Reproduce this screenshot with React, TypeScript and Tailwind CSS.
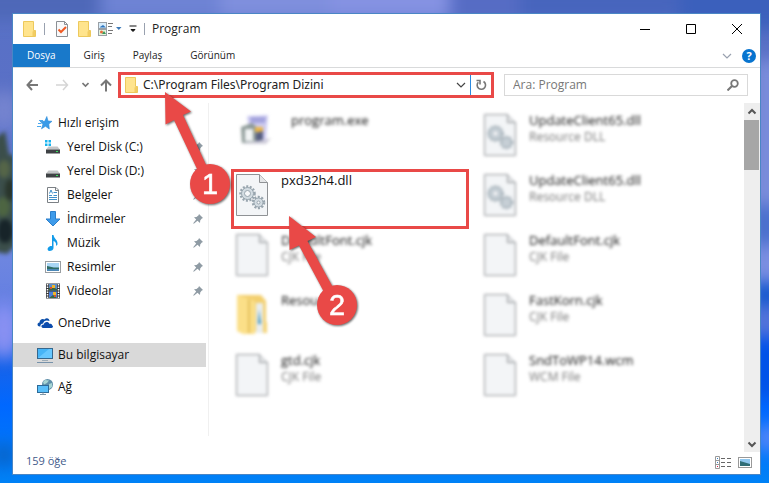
import type { ReactNode } from 'react';

type NavItem = { label: string; icon: ReactNode; child?: boolean; active?: boolean; gap?: boolean };
type FileItem = { name: string; type?: string; icon: ReactNode; active?: boolean; indent?: boolean };

function Wallpaper() {
  return (
    <svg
      className="absolute inset-0 w-full h-full"
      viewBox="0 0 769 483"
      preserveAspectRatio="none"
      aria-hidden="true"
    >
      <defs>
        <linearGradient id="sky" x1="0" y1="0" x2="0" y2="1">
          <stop offset="0" stopColor="#5871c6" />
          <stop offset="0.2" stopColor="#5a70c6" />
          <stop offset="0.5" stopColor="#7188df" />
          <stop offset="0.62" stopColor="#6580e2" />
          <stop offset="0.76" stopColor="#1663ea" />
          <stop offset="0.84" stopColor="#0068ff" />
          <stop offset="1" stopColor="#0082f6" />
        </linearGradient>
        <filter id="soft" x="-20%" y="-20%" width="140%" height="140%" colorInterpolationFilters="sRGB">
          <feGaussianBlur stdDeviation="8" />
        </filter>
        <filter id="leafSoft" colorInterpolationFilters="sRGB">
          <feGaussianBlur stdDeviation="2" />
        </filter>
      </defs>
      <rect width="769" height="483" fill="url(#sky)" />
      <g filter="url(#soft)">
        <rect x="-30" y="-30" width="130" height="50" fill="#4e68b8" />
        <rect x="100" y="-30" width="120" height="50" fill="#6e83d4" />
        <rect x="220" y="-30" width="110" height="50" fill="#7f8fdd" />
        <rect x="330" y="-30" width="120" height="50" fill="#8592e2" />
        <rect x="450" y="-30" width="70" height="50" fill="#566cc4" />
        <rect x="520" y="-30" width="160" height="50" fill="#4765bd" />
        <rect x="680" y="-30" width="110" height="60" fill="#3b60bc" />
        <rect x="752" y="60" width="30" height="145" fill="#7a8cda" />
        <rect x="752" y="205" width="30" height="40" fill="#4a70cc" />
        <rect x="752" y="245" width="30" height="35" fill="#7b8fe0" />
        <rect x="752" y="283" width="30" height="22" fill="#1057cc" />
        <rect x="752" y="305" width="30" height="32" fill="#5273d9" />
        <rect x="752" y="337" width="30" height="60" fill="#0052e8" />
        <ellipse cx="768" cy="438" rx="14" ry="14" fill="#5486f7" />
        <ellipse cx="4" cy="110" rx="16" ry="20" fill="#7584cf" />
        <ellipse cx="4" cy="330" rx="16" ry="28" fill="#8a91f2" />
        <ellipse cx="4" cy="455" rx="12" ry="12" fill="#0863c6" />
      </g>
      <g filter="url(#leafSoft)">
        <path d="M-4 138L5 131L9 154L15 156V246L7 254L-4 252Z" fill="#3b4e4a" />
        <ellipse cx="4" cy="169" rx="6" ry="9" fill="#556548" />
        <ellipse cx="10" cy="190" rx="5" ry="11" fill="#29352b" />
        <ellipse cx="3" cy="207" rx="7" ry="10" fill="#4d6542" />
        <ellipse cx="5" cy="231" rx="8" ry="12" fill="#172429" />
      </g>
    </svg>
  );
}

function FolderIcon() {
  return (
    <svg width="13" height="16" viewBox="0 0 13 16" aria-hidden="true">
      <path d="M0.5 0.5H10.500V9.500H12.500V15.500H0.500Z" fill="#ffe48d" stroke="#edc95c" />
      <path d="M9.500 15V10.500L12 9.500V15Z" fill="#f2cc62" />
    </svg>
  );
}

function CheckPageIcon() {
  return (
    <svg width="12" height="16" viewBox="0 0 12 16" fill="none" aria-hidden="true">
      <path d="M0.5 0.5H8.500L11.500 3.500V15.500H0.500Z" fill="#f8f9fa" stroke="#8b8f94" />
      <path d="M8.500 0.500V3.500H11.500" stroke="#8b8f94" />
      <path d="M2.500 8.500L5 11L10 6" stroke="#f05a23" strokeWidth="2" />
    </svg>
  );
}

function ViewMenuIcon() {
  return (
    <svg width="24" height="16" viewBox="0 0 24 16" aria-hidden="true">
      <rect x="0.5" y="1.5" width="8" height="6" fill="#d7ecfb" stroke="#9aa0a6" />
      <path d="M2 6L5 4L8 6.500H2Z" fill="#2d74bd" />
      <rect x="0.5" y="8.500" width="8" height="6" fill="#e5f3dd" stroke="#9aa0a6" />
      <circle cx="3.500" cy="11" r="1.500" fill="#e76a3c" />
      <path d="M4 13L6 10L8 13Z" fill="#3d9656" />
      <path d="M10 2.500H15M10 5.500H14M10 9.500H15M10 12.500H14" stroke="#777" />
      <path d="M18 6H23.500L20.800 9Z" fill="#3d7ab8" />
    </svg>
  );
}

function StarIcon() {
  return (
    <svg width="16" height="16" viewBox="0 0 16 16" aria-hidden="true">
      <path d="M9.800 1.500L11 6L15 6.300L11.800 9L12.300 14L8.500 11.300L4.500 13.800L6 9L3 6.300H7.800Z" fill="#3a9be8" stroke="#2b8bd8" strokeWidth="0.6" />
      <path d="M2 5.500H6M1 8.500H4.500M0 11.500H4" stroke="#4ba8ed" />
    </svg>
  );
}

function DriveIcon({ system = false }: { system?: boolean }) {
  return (
    <svg width="16" height="16" viewBox="0 0 16 16" aria-hidden="true">
      {system && (
        <path d="M0 1H2.500V3.500H0ZM3.500 1H6V3.500H3.500ZM0 4.500H2.500V7H0ZM3.500 4.500H6V7H3.500Z" fill="#18b4ef" />
      )}
      <path d="M3.500 7.500H12.500L15 10.500H1Z" fill="#c3c5c7" />
      <rect x="1" y="10.500" width="14" height="4" fill="#3f4245" />
      <rect x="11" y="12" width="2" height="1" fill="#38e15c" />
    </svg>
  );
}

function DocumentIcon() {
  return (
    <svg width="16" height="16" viewBox="0 0 16 16" fill="none" aria-hidden="true">
      <path d="M2.500 0.500H11L13.500 3V15.500H2.500Z" fill="#fff" stroke="#7b8085" />
      <path d="M10.500 0.500V3.500H13.500" stroke="#7b8085" />
      <path d="M4.500 6.500L6 3L7.500 6.500M8.500 5.500H12M4 8.500H7M8.500 8.500H12M4 10.500H12M4 12.500H12" stroke="#3f8fc9" />
    </svg>
  );
}

function DownloadIcon() {
  return (
    <svg width="16" height="16" viewBox="0 0 16 16" aria-hidden="true">
      <path d="M5.500 0.500H10.500V8H15L8 15L1 8H5.500Z" fill="#3e9bea" stroke="#2b7fcb" />
    </svg>
  );
}

function MusicIcon() {
  return (
    <svg width="16" height="16" viewBox="0 0 16 16" aria-hidden="true">
      <path d="M7 0H8.500C9 4 13 4.500 12.500 9.500L11 11C11.500 7.500 10 6.500 8.500 6V13C8.500 15 6.500 16 4.500 16C2 16 2 12.500 4.500 11.500C5.500 11 6.500 11 7 11.300Z" fill="#129be9" />
    </svg>
  );
}

function PictureIcon() {
  return (
    <svg width="16" height="16" viewBox="0 0 16 16" aria-hidden="true">
      <rect x="0.5" y="2.500" width="15" height="11" fill="#fff" stroke="#999ea2" />
      <rect x="2" y="4" width="12" height="8" fill="#a9d6f5" />
      <path d="M2 7C6 7.500 8 9 14 8.500V10H2Z" fill="#2f6d66" />
      <path d="M2 10H14V12H2Z" fill="#4c88b7" />
    </svg>
  );
}

function VideoIcon() {
  return (
    <svg width="16" height="16" viewBox="0 0 16 16" aria-hidden="true">
      <rect x="1" y="0.5" width="14" height="15" fill="#37393c" />
      <path d="M2.500 1V15M13.500 1V15" stroke="#fff" strokeWidth="1.500" strokeDasharray="1.500 1" />
      <rect x="4" y="1" width="8" height="6.500" fill="#5d8ec8" />
      <rect x="4" y="8.500" width="8" height="6.500" fill="#4c7fdc" />
      <path d="M4 7.500V5L7 4L12 6V7.500ZM4 15L8 12L12 15Z" fill="#376745" />
      <path d="M7 2H10V5H7ZM8 9H11V12H8Z" fill="#f0b62a" />
      <path d="M5 4H7V6H5ZM9 12H11V14H9Z" fill="#d95131" />
    </svg>
  );
}

function CloudIcon() {
  return (
    <svg width="16" height="16" viewBox="0 0 16 16" aria-hidden="true">
      <path d="M3.500 11.500C0 12 -0.500 8 2.500 7.500C2.500 4.500 5.500 3 7.500 4.500C9.500 2 12.500 3.500 12.500 6C9 4.500 6.500 6 6.200 8.500C4 8.500 3 10 3.500 11.500Z" fill="#0b4eaa" />
      <path d="M6 13C3.500 12.500 4 9.500 6.800 9.500C7 6.500 11.500 6 12.500 9C14.500 8.500 15 9.500 15 10.200C16.500 10.500 16.300 13 14.500 13Z" fill="#0c4cad" />
    </svg>
  );
}

function MonitorIcon() {
  return (
    <svg width="16" height="16" viewBox="0 0 16 16" aria-hidden="true">
      <rect x="0.5" y="1.500" width="15" height="10" fill="#47b5f7" stroke="#35678d" />
      <path d="M1 11L12 2H15V11Z" fill="#68c8ff" />
      <path d="M5 13.500H11" stroke="#9dacb8" />
      <path d="M0 15.500H16" stroke="#7792aa" />
    </svg>
  );
}

function NetworkIcon() {
  return (
    <svg width="16" height="16" viewBox="0 0 16 16" aria-hidden="true">
      <circle cx="10.500" cy="5.500" r="5.500" fill="#5f8fa9" />
      <path d="M8 1L12 1.500L10 4L7 5.500L6 3ZM12 5L15 4V8L12 10Z" fill="#a7d5d3" />
      <rect x="0.5" y="6.500" width="11" height="7" fill="#59bff9" stroke="#2d6b99" />
      <path d="M6 13.500V15.500M3 15.500H9" stroke="#7e97a8" />
    </svg>
  );
}

function PinIcon() {
  return (
    <svg className="ml-auto mr-[3px]" width="10" height="10" viewBox="0 0 10 10" aria-hidden="true">
      <path d="M6 0L10 4L8.800 4.500L7.200 6.500L7 9L4.500 6.800L0.800 9.800L0.200 9.200L3.200 5.500L1 3.200L3.500 3L5.600 1.300Z" fill="#8f9ba4" />
    </svg>
  );
}

function Gear({ x, y, r }: { x: number; y: number; r: number }) {
  return (
    <g fill="none" stroke="#98a5ae">
      <circle cx={x} cy={y} r={r} strokeWidth="2.500" strokeDasharray="2 1.500" />
      <circle cx={x} cy={y} r={r - 1} fill="#d3dce2" />
      <circle cx={x} cy={y} r={r - 4} fill="#f7f8fa" />
    </g>
  );
}

function PageIcon({ gears = false }: { gears?: boolean }) {
  return (
    <svg width="32" height="42" viewBox="0 0 32 42" aria-hidden="true">
      <path d="M0.5 0.5H23.500L31.500 8.500V41.500H0.500Z" fill="#f3f5f7" stroke="#8f9295" />
      <path d="M23.500 0.500V8.500H31.500" fill="#e4e6e8" stroke="#8f9295" />
      {gears && (
        <>
          <Gear x={11.5} y={19.5} r={7} />
          <Gear x={22.5} y={28.5} r={5.5} />
        </>
      )}
    </svg>
  );
}

function ProgramIcon() {
  return (
    <svg width="36" height="42" viewBox="0 0 36 42" aria-hidden="true">
      <path d="M11 2L32 1L30 27L14 24Z" fill="#cfcdf2" />
      <path d="M14 3H30L29 9H15Z" fill="#a3a3dd" />
      <path d="M5 13L16 9L22 14V27L6 29Z" fill="#8d9a98" />
      <path d="M9 15H17V27H9Z" fill="#f2f5f6" />
      <path d="M19 13H27V18H19Z" fill="#edb646" />
      <path d="M20 19L27 17V28H20Z" fill="#565d80" />
      <path d="M27 26L35 24L30 30H5Z" fill="#cfcdda" />
    </svg>
  );
}

function OpenFolderIcon() {
  return (
    <svg width="32" height="42" viewBox="0 0 32 42" aria-hidden="true">
      <path d="M1 1H25L30 7V38H22L1 35Z" fill="#f3cf6e" />
      <path d="M20 9H27V39H20Z" fill="#e9eef0" />
      <path d="M23 15L25 30H22Z" fill="#3b91b8" />
      <path d="M1 1L19 7V40H7L1 37Z" fill="#fbdf88" />
      <path d="M12 5L14 6V39H12Z" fill="#e3bf5c" />
      <path d="M27 28H31V39H27Z" fill="#f6d477" />
    </svg>
  );
}

function Chevron({ bold = false, className }: { bold?: boolean; className: string }) {
  return (
    <svg className={className} width="10" height="8" viewBox="0 0 10 8" fill="none" stroke="currentColor" aria-hidden="true">
      <path d={bold ? 'M1.500 2.500L5 6L8.500 2.500' : 'M1 2L5 6L9 2'} strokeWidth={bold ? 2 : 1.2} />
    </svg>
  );
}

// Numbered marker: the tip of the arrow is always at (10, 10)
function Callout({ step, className }: { step: 1 | 2; className: string }) {
  const first = step === 1;
  return (
    <svg
      className={'absolute z-10 max-w-none pointer-events-none drop-shadow-[1px_1px_1px_rgba(0,0,0,0.6)] ' + className}
      width="84"
      height="126"
      viewBox="0 0 84 126"
    >
      <g fill="#e94947">
        <path
          d={
            first
              ? 'M10 10L36 29.500L28 33L59 100L50 104L19 38L10.500 42.500Z'
              : 'M10 10L37 31L28.500 35L62 96L53 101L20 39.500L10.500 44Z'
          }
        />
        <circle cx={first ? 55 : 58} cy={first ? 102 : 99} r="20" />
      </g>
      <text
        x={first ? 55 : 58}
        y={first ? 112 : 109}
        textAnchor="middle"
        fill="#fff"
        stroke="#fff"
        strokeWidth="0.5"
        className="font-['Liberation_Sans',sans-serif] text-[29px]"
      >
        {step}
      </text>
    </svg>
  );
}

const navItems: NavItem[] = [
  { label: 'Hızlı erişim', icon: <StarIcon /> },
  { label: 'Yerel Disk (C:)', icon: <DriveIcon system />, child: true },
  { label: 'Yerel Disk (D:)', icon: <DriveIcon />, child: true },
  { label: 'Belgeler', icon: <DocumentIcon />, child: true },
  { label: 'İndirmeler', icon: <DownloadIcon />, child: true },
  { label: 'Müzik', icon: <MusicIcon />, child: true },
  { label: 'Resimler', icon: <PictureIcon />, child: true },
  { label: 'Videolar', icon: <VideoIcon />, child: true },
  { label: 'OneDrive', icon: <CloudIcon />, gap: true },
  { label: 'Bu bilgisayar', icon: <MonitorIcon />, gap: true, active: true },
  { label: 'Ağ', icon: <NetworkIcon />, gap: true },
];

const files: FileItem[] = [
  { name: 'program.exe', icon: <ProgramIcon />, indent: true },
  { name: 'UpdateClient65.dll', type: 'Resource DLL', icon: <PageIcon gears /> },
  { name: 'pxd32h4.dll', icon: <PageIcon gears />, active: true },
  { name: 'UpdateClient65.dll', type: 'Resource DLL', icon: <PageIcon gears /> },
  { name: 'DefaultFont.cjk', type: 'CJK File', icon: <PageIcon /> },
  { name: 'DefaultFont.cjk', type: 'CJK File', icon: <PageIcon /> },
  { name: 'Resou', icon: <OpenFolderIcon /> },
  { name: 'FastKorn.cjk', type: 'CJK File', icon: <PageIcon /> },
  { name: 'gtd.cjk', type: 'CJK File', icon: <PageIcon /> },
  { name: 'SndToWP14.wcm', type: 'WCM File', icon: <PageIcon /> },
];

function TitleBar() {
  return (
    <header className="flex items-center h-[30px] pl-[10px]">
      <FolderIcon />
      <span className="w-px h-3 ml-2 mr-[11px] bg-gray-400" />
      <button aria-label="Özellikler"><CheckPageIcon /></button>
      <button aria-label="Yeni klasör" className="ml-[10px]"><FolderIcon /></button>
      <button aria-label="Düzen" className="ml-[7px]"><ViewMenuIcon /></button>
      <button aria-label="Özelleştir" className="ml-[7px]">
        <svg width="8" height="8" viewBox="0 0 8 8" aria-hidden="true">
          <path d="M0.500 1H7.500M2 4.500H6L4 6.500Z" fill="#111" stroke="#111" />
        </svg>
      </button>
      <span className="w-px h-3 mx-[7px] bg-gray-400" />
      <h1 className="flex-1 text-[12px] text-[#222]">Program</h1>
      <div className="flex">
        <button aria-label="Simge durumuna küçült" className="grid place-items-center w-[46px] h-[30px]">
          <svg width="10" height="10" viewBox="0 0 10 10" stroke="#000" aria-hidden="true"><path d="M0 5.500H10" /></svg>
        </button>
        <button aria-label="Ekranı kapla" className="grid place-items-center w-[46px] h-[30px]">
          <svg width="10" height="10" viewBox="0 0 10 10" fill="none" stroke="#000" aria-hidden="true"><path d="M0.500 0.500H9.500V9.500H0.500Z" /></svg>
        </button>
        <button aria-label="Kapat" className="grid place-items-center w-[46px] h-[30px]">
          <svg width="10" height="10" viewBox="0 0 10 10" stroke="#000" aria-hidden="true"><path d="M0 0L10 10M10 0L0 10" /></svg>
        </button>
      </div>
    </header>
  );
}

function Ribbon() {
  return (
    <nav className="flex h-6 pr-1 border-b border-[#d9dadb] text-[10px] text-[#222]">
      <button className="px-[14px] bg-[#1979ca] text-white">Dosya</button>
      <button className="px-[14px]">Giriş</button>
      <button className="px-[14px]">Paylaş</button>
      <button className="px-[14px]">Görünüm</button>
      <button aria-label="Şeridi genişlet" className="ml-auto mr-[10px] text-gray-400">
        <Chevron className="block" />
      </button>
      <button aria-label="Yardım" className="self-center grid place-items-center size-[14px] rounded-full bg-[#0874cf] text-white text-[11px] leading-[14px] font-bold">
        ?
      </button>
    </nav>
  );
}

function AddressRow() {
  return (
    <div className="flex items-start h-[35px] pt-1 pl-[13px] pr-3">
      <div className="flex items-center h-[26px] w-[92px] shrink-0 text-[#777]">
        <button aria-label="Geri">
          <svg width="13" height="12" viewBox="0 0 13 12" fill="none" stroke="currentColor" strokeWidth="2" aria-hidden="true"><path d="M6 1L1.500 6L6 11M1.500 6H12" /></svg>
        </button>
        <button aria-label="İleri" className="ml-[17px] text-[#d5d5d5]">
          <svg width="13" height="12" viewBox="0 0 13 12" fill="none" stroke="currentColor" strokeWidth="1.500" aria-hidden="true"><path d="M7 1L11.500 6L7 11M11.500 6H0" /></svg>
        </button>
        <button aria-label="Son konumlar" className="ml-[13px]">
          <svg width="7" height="6" viewBox="0 0 7 6" fill="none" stroke="currentColor" strokeWidth="1.600" aria-hidden="true"><path d="M0.500 1L3.500 4L6.500 1" /></svg>
        </button>
        <button aria-label="Yukarı" className="ml-[11px]">
          <svg width="12" height="13" viewBox="0 0 12 13" fill="none" stroke="currentColor" strokeWidth="2" aria-hidden="true"><path d="M1 6.500L6 1.500L11 6.500M6 1.500V12.500" /></svg>
        </button>
      </div>
      <div className="relative flex items-center flex-1 min-w-0 h-[26px] border-3 border-[#e94947] pl-1">
        <FolderIcon />
        <input
          aria-label="Adres"
          defaultValue="C:\Program Files\Program Dizini"
          className="flex-1 min-w-0 ml-[5px] font-['Noto_Sans',sans-serif] text-[12px] text-[#222] outline-none"
        />
        <button aria-label="Önceki konumlar" className="mr-1 text-[#444]"><Chevron className="block" /></button>
        <button aria-label="Yenile" className="grid place-items-center w-[21px] h-5 border-l border-[#2b8ae0]">
          <svg width="12" height="12" viewBox="0 0 12 12" fill="none" stroke="#777" strokeWidth="1.600" aria-hidden="true">
            <path d="M8.500 2.500A4.200 4.200 0 1 1 3.300 3.200M1.500 1.500H5V5.500" />
          </svg>
        </button>
        <Callout step={1} className="left-[34px] top-[7px]" />
      </div>
      <div className="flex items-center w-[244px] shrink-0 h-[22px] mt-[2px] ml-[10px] px-2 border border-[#d9d9d9]">
        <input
          aria-label="Ara"
          placeholder="Ara: Program"
          className="flex-1 min-w-0 text-[12px] placeholder:text-[#777] outline-none"
        />
        <svg width="12" height="12" viewBox="0 0 12 12" fill="none" stroke="#777" aria-hidden="true">
          <circle cx="7.500" cy="4.500" r="3.300" strokeWidth="1.800" />
          <path d="M5 7L0.500 11.500" strokeWidth="2" />
        </svg>
      </div>
    </div>
  );
}

function Sidebar() {
  return (
    <nav className="w-[196px] shrink-0 pt-2 pr-[2px] mb-4 border-r border-[#f0f0f0]">
      <ul>
        {navItems.map((item) => (
          <li key={item.label} className={item.gap ? 'mt-2' : ''}>
            <a
              href="#"
              className={
                'flex items-center h-6 text-[12px] text-[#111] ' +
                (item.child ? 'pl-8 gap-[6px] ' : 'pl-6 gap-[5px] ') +
                (item.active ? 'bg-[#d9d9d9]' : '')
              }
            >
              {item.icon}
              {item.label}
              {item.child && <PinIcon />}
            </a>
          </li>
        ))}
      </ul>
    </nav>
  );
}

function FileGrid() {
  return (
    <main className="flex-1 min-w-0 pl-[22px] pt-[6px]">
      <ul className="grid grid-cols-[repeat(auto-fill,238px)] gap-x-[10px]">
        {files.map((file, i) => (
          <li
            key={i}
            className={
              'relative h-[60px] border-3 px-0.5 pt-px ' +
              (file.active ? 'border-[#e94947]' : 'border-transparent blur-[1px]')
            }
          >
            <div className={'flex gap-[13px] ' + (file.active ? '' : 'blur-[1px]')}>
              <div className="w-8 pt-px shrink-0">{file.icon}</div>
              <div className={file.indent ? 'pl-[10px]' : ''}>
                <p className="text-[13px] leading-[14px] text-[#111]">{file.name}</p>
                {file.type && <p className="mt-[3px] text-[12px] leading-[14px] text-[#777]">{file.type}</p>}
              </div>
            </div>
            {file.active && <Callout step={2} className="left-[45px] top-[34px]" />}
          </li>
        ))}
      </ul>
    </main>
  );
}

function Scrollbar() {
  return (
    <div className="flex flex-col w-4 shrink-0 bg-[#eeeeee] text-[#555]">
      <button aria-label="Yukarı kaydır" className="grid place-items-center h-[17px]">
        <Chevron bold className="block rotate-180" />
      </button>
      <div className="h-[50px] mr-px bg-[#a6a6a6]" />
      <button aria-label="Aşağı kaydır" className="grid place-items-center h-[17px] mt-auto">
        <Chevron bold className="block" />
      </button>
    </div>
  );
}

function StatusBar() {
  return (
    <footer className="flex items-start h-[22px] pt-px pl-[13px] pr-2 text-[11px] leading-4 text-[#3f5a8a]">
      <span>159 öğe</span>
      <button aria-label="Ayrıntılar" className="ml-auto mt-[3px]">
        <svg width="16" height="13" viewBox="0 0 16 13" fill="none" stroke="#999" aria-hidden="true">
          <path d="M0.500 0.500H4.500V12.500H0.500ZM0.500 4.500H4.500M0.500 8.500H4.500" />
          <path d="M6 2.500H10M12 2.500H16M6 6.500H10M12 6.500H16M6 10.500H10M12 10.500H16" stroke="#666" />
          <path d="M2 2.500H3M2 6.500H3" stroke="#3b82c4" />
          <path d="M2 10.500H3" stroke="#e11d48" />
        </svg>
      </button>
      <button aria-label="Büyük simgeler" className="ml-[7px] mt-1">
        <svg width="14" height="12" viewBox="0 0 14 12" aria-hidden="true">
          <rect x="0.5" y="0.5" width="13" height="10" fill="#fff" stroke="#999" />
          <rect x="2" y="2" width="10" height="7" fill="#8fc7ef" />
          <path d="M2 4L12 7V9H2Z" fill="#2f6d76" />
        </svg>
      </button>
    </footer>
  );
}

export default function App() {
  return (
    <div className="relative flex min-h-screen pt-[13px] pr-2 pb-2 pl-3 overflow-hidden font-['Open_Sans','Noto_Sans',sans-serif]">
      <Wallpaper />
      <div className="relative flex flex-col flex-1 min-w-0 bg-white border border-[#4a86c5]">
        <TitleBar />
        <Ribbon />
        <AddressRow />
        <div className="flex flex-1">
          <Sidebar />
          <FileGrid />
          <Scrollbar />
        </div>
        <StatusBar />
      </div>
    </div>
  );
}
